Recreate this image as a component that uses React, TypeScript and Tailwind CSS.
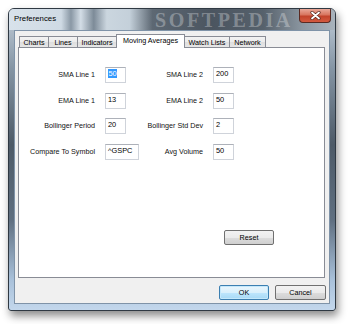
import React from "react";

const tabs = [
  { label: "Charts", w: "w-[30px]" },
  { label: "Lines", w: "w-[30px]" },
  { label: "Indicators", w: "w-[40px]" },
  { label: "Moving Averages", w: "w-[69px]", active: true },
  { label: "Watch Lists", w: "w-[46px]" },
  { label: "Network", w: "w-[37px]" },
];

function Field({ value, wide, selected }: { value: string; wide?: boolean; selected?: boolean }) {
  return (
    <div
      className={`h-[16px] ${wide ? "w-[34px]" : "w-[21px]"} bg-white border border-[#cfd3da] border-t-[#adb1b9] pl-[2px] pt-[1px] text-[7.4px] leading-[9px] text-black justify-self-start`}
    >
      {selected ? <span className="bg-[#3399ff] text-white px-[0.5px]">{value}</span> : value}
    </div>
  );
}

function Label({ children }: { children: React.ReactNode }) {
  return <div className="text-right text-[7.2px] leading-[16px] text-[#111] whitespace-nowrap">{children}</div>;
}

export default function App() {
  return (
    <div className="w-[350px] h-[324px] bg-white pt-[8px] pl-[8px] font-['Liberation_Sans',Arial,sans-serif] overflow-hidden">
      <div className="relative w-[328px] h-[303px] flex flex-col border border-[#2f3943] rounded-t-[6px] rounded-b-[3px] bg-[linear-gradient(to_bottom,#c3cfdb_0%,#8494a3_20%,#4d5a67_45%,#5f6f80_70%,#a9c1da_90%,#c3d7ec_100%)] shadow-[2px_5px_8px_rgba(0,0,0,0.45)]">
        {/* Title bar */}
        <div className="relative h-[21px] flex items-start justify-between rounded-t-[5px] overflow-hidden bg-[linear-gradient(to_right,#d8e2eb_0%,#cfdae4_16%,#8a98a5_19%,#d3dde6_22%,#7d8b98_26%,#cbd6df_30%,#c4d0da_37%,#5d6873_44%,#4b5560_62%,#56616c_78%,#8c97a1_90%,#a9b3bc_100%)]">
          <div className="pl-[5px] pt-[5px] text-[7.8px] leading-[10px] text-black">Preferences</div>
          <div className="absolute left-[146px] top-[1px] font-['Liberation_Serif',serif] font-bold text-[20px] leading-[20px] tracking-[2.6px] text-[rgba(255,255,255,0.3)] select-none">
            SOFTPEDIA
          </div>
          <div className="relative mr-[4px] w-[32px] h-[14px] rounded-b-[4px] border border-t-0 border-[#5a2a22] bg-[linear-gradient(to_bottom,#e9a899_0%,#d8755f_45%,#c2432b_55%,#d45a3f_100%)] flex items-center justify-center">
            <svg width="11" height="9" viewBox="0 0 11 9">
              <path d="M2 1.5 L9 7.5 M9 1.5 L2 7.5" stroke="#5a2a22" strokeWidth="3.2" strokeLinecap="round" />
              <path d="M2 1.5 L9 7.5 M9 1.5 L2 7.5" stroke="#ffffff" strokeWidth="1.8" strokeLinecap="round" />
            </svg>
          </div>
        </div>

        {/* Client area */}
        <div className="mx-[5px] mb-[6px] h-[274px] bg-[#f0f0f0] border border-[#7f93a8] flex flex-col pt-[3px]">
          {/* Tabs */}
          <div className="flex items-end h-[13px] ml-[4px]">
            {tabs.map((t, i) =>
              t.active ? (
                <div
                  key={t.label}
                  className={`${t.w} h-[14px] -mb-[1px] relative z-10 bg-white border border-b-0 border-[#898c95] ${i > 0 ? "-ml-px" : ""} flex items-center justify-center text-[7.2px] leading-[9px] text-black whitespace-nowrap pb-[2px]`}
                >
                  {t.label}
                </div>
              ) : (
                <div
                  key={t.label}
                  className={`${t.w} h-[11px] bg-[linear-gradient(to_bottom,#f3f3f3_0%,#ebebeb_50%,#dedede_51%,#e6e6e6_100%)] border border-b-0 border-[#898c95] ${i > 0 ? "-ml-px" : ""} flex items-center justify-center text-[7.2px] leading-[9px] text-black whitespace-nowrap`}
                >
                  {t.label}
                </div>
              )
            )}
          </div>

          {/* Panel */}
          <div className="relative ml-[3px] w-[307px] h-[231px] bg-white border border-[#898c95] flex flex-col">
            <div className="grid grid-cols-[76px_21px_67px_21px] gap-x-[10px] gap-y-[9.5px] pt-[19px] auto-rows-[16px] items-center">
              <Label>SMA Line 1</Label>
              <Field value="50" selected />
              <Label>SMA Line 2</Label>
              <Field value="200" />

              <Label>EMA Line 1</Label>
              <Field value="13" />
              <Label>EMA Line 2</Label>
              <Field value="50" />

              <Label>Bollinger Period</Label>
              <Field value="20" />
              <Label>Bollinger Std Dev</Label>
              <Field value="2" />

              <Label>Compare To Symbol</Label>
              <Field value="^GSPC" wide />
              <Label>Avg Volume</Label>
              <Field value="50" />
            </div>
            <div className="mt-auto flex justify-end pr-[50px] pb-[32px]">
              <button className="w-[50px] h-[15px] rounded-[2px] border border-[#707070] bg-[linear-gradient(to_bottom,#f2f2f2_0%,#ebebeb_50%,#dddddd_51%,#cfcfcf_100%)] text-[7.2px] leading-[9px] text-black">
                Reset
              </button>
            </div>
          </div>

          {/* Bottom buttons */}
          <div className="mt-[7px] flex justify-end gap-[6px] mr-[3px]">
            <button className="w-[50px] h-[15px] rounded-[2px] border border-[#3c7fb1] shadow-[inset_0_0_0_1px_#c4e8fb] bg-[linear-gradient(to_bottom,#eaf6fd_0%,#d9f0fc_50%,#bee6fd_51%,#a7d9f5_100%)] text-[7.2px] leading-[9px] text-black">
              OK
            </button>
            <button className="w-[51px] h-[15px] rounded-[2px] border border-[#707070] bg-[linear-gradient(to_bottom,#f2f2f2_0%,#ebebeb_50%,#dddddd_51%,#cfcfcf_100%)] text-[7.2px] leading-[9px] text-black">
              Cancel
            </button>
          </div>
        </div>
      </div>
    </div>
  );
}
